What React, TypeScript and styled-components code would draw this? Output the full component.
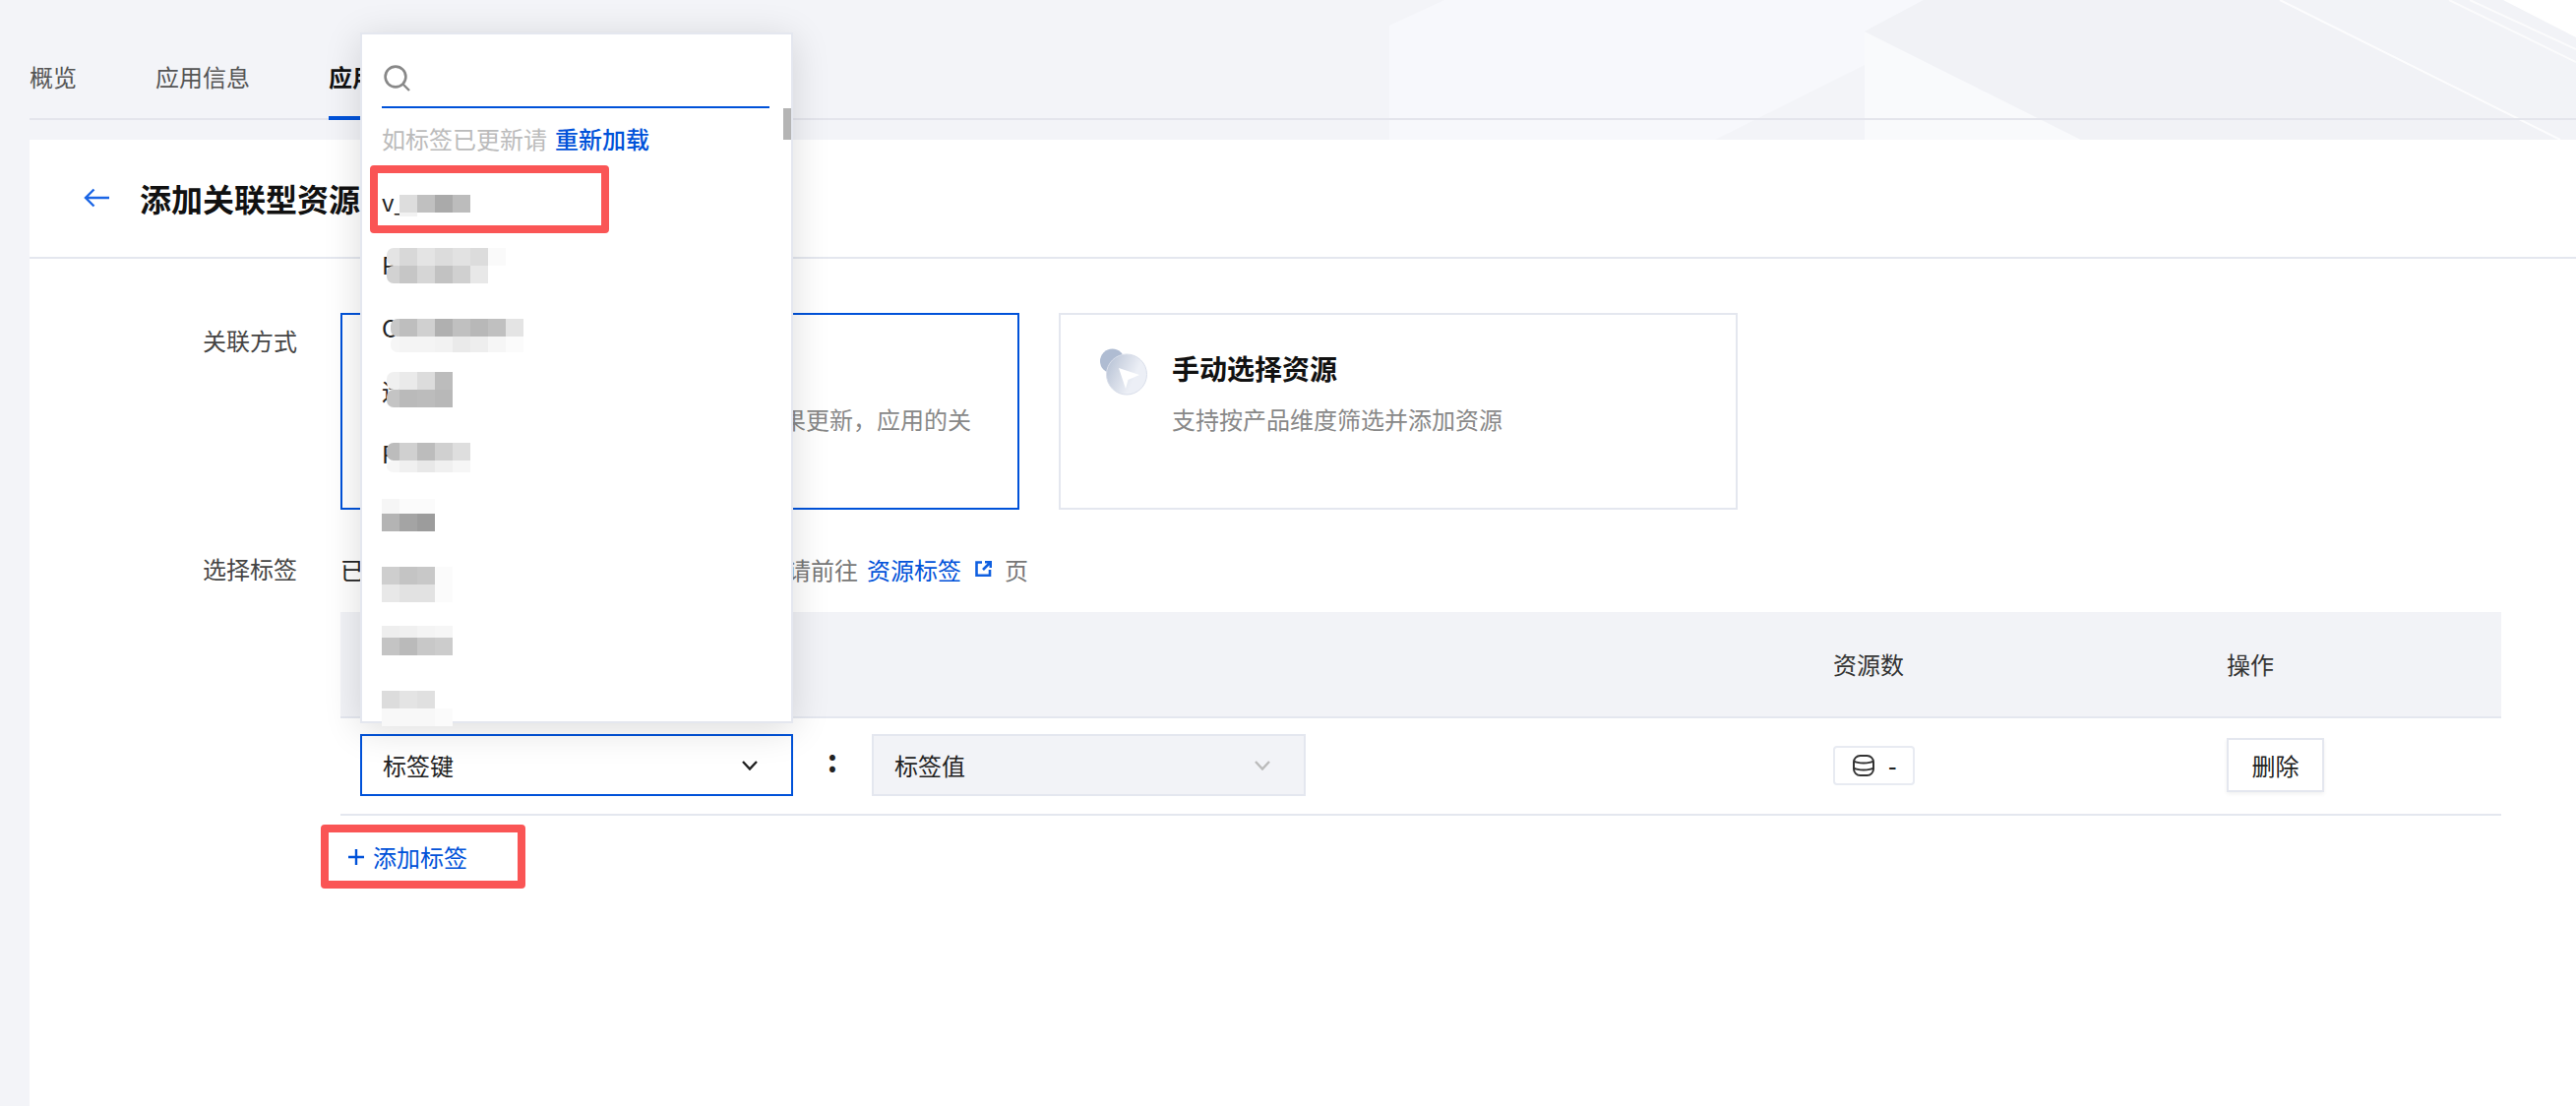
import React from 'react';
import styled, { createGlobalStyle } from 'styled-components';

const GlobalStyle = createGlobalStyle`
    html, body {
        margin: 0;
        padding: 0;
        background: #f3f4f8;
    }
    * {
        box-sizing: border-box;
    }
    body {
        font-family: "Noto Sans CJK SC", "Noto Sans", sans-serif;
        font-size: 24px;
        color: #222;
        overflow: hidden;
    }
`;

const BLUE = '#0052d9';
const LINE = '#e4e7ef';
const RED = '#fa5555';

const Page = styled.div`
    position: relative;
    width: 2618px;
    height: 1124px;
    overflow: hidden;
    background: #f3f4f8;
`;

const BackgroundArt = styled.svg`
    position: absolute;
    top: 0;
    left: 0;
`;

const TabBar = styled.div`
    position: relative;
    display: flex;
    align-items: flex-start;
    gap: 80px;
    height: 122px;
    margin: 0 0 20px 30px;
    border-bottom: 2px solid #e4e5ec;
`;

const Tab = styled.div<{ $active?: boolean }>`
    height: 122px;
    padding-top: 60px;
    line-height: 36px;
    color: ${(props) => (props.$active ? '#111' : '#555')};
    font-weight: ${(props) => (props.$active ? 600 : 400)};
    border-bottom: 4px solid ${(props) => (props.$active ? BLUE : 'transparent')};
`;

const Panel = styled.div`
    position: relative;
    margin-left: 30px;
    height: 982px;
    background: #fff;
`;

const PanelHeader = styled.div`
    display: flex;
    align-items: center;
    gap: 31px;
    height: 121px;
    padding: 0 0 1px 55px;
    border-bottom: 2px solid ${LINE};
`;

const PanelTitle = styled.div`
    font-size: 32px;
    font-weight: 600;
    line-height: 44px;
    color: #111;
`;

const Form = styled.div`
    display: grid;
    grid-template-columns: 96px 2196px;
    column-gap: 44px;
    padding: 55px 0 0 176px;
`;

const FieldLabel = styled.div<{ $top: number }>`
    padding-top: ${(props) => props.$top}px;
    line-height: 36px;
    color: #444;
`;

const CardRow = styled.div`
    display: flex;
    gap: 40px;
    margin-bottom: 42px;
`;

const Card = styled.div<{ $active?: boolean }>`
    display: flex;
    gap: ${(props) => (props.$active ? 23 : 25)}px;
    width: 690px;
    height: 200px;
    padding: 34px 40px 0;
    border: 2px solid ${(props) => (props.$active ? BLUE : LINE)};
`;

const CardIcon = styled.svg`
    flex: none;
`;

const CardTitle = styled.div`
    margin-bottom: 12px;
    font-size: 28px;
    font-weight: 600;
    line-height: 40px;
    color: #111;
`;

const CardText = styled.div`
    line-height: 40px;
    color: #888;
`;

const Hint = styled.div`
    display: flex;
    align-items: center;
    height: 36px;
    color: #777;
`;

const HintLead = styled.span`
    margin-right: -2px;
    color: #222;
`;

const HintLink = styled.a`
    margin: 0 14px 0 9px;
    color: ${BLUE};
`;

const ExternalIcon = styled.svg`
    margin-right: 13px;
`;

const TagTable = styled.div`
    margin-top: 26px;
`;

const TableRow = styled.div<{ $head?: boolean }>`
    display: grid;
    grid-template-columns: 1517px 400px 279px;
    align-items: center;
    height: ${(props) => (props.$head ? 108 : 99)}px;
    padding-bottom: ${(props) => (props.$head ? 0 : 2)}px;
    background: ${(props) => (props.$head ? '#f2f3f7' : '#fff')};
    border-bottom: 2px solid ${LINE};
`;

const HeadCell = styled.div`
    line-height: 36px;
    color: #333;
`;

const TagCell = styled.div`
    display: flex;
    align-items: center;
    padding-left: 20px;
`;

const SelectWrap = styled.div`
    position: relative;
`;

const Select = styled.div<{ $open?: boolean }>`
    display: flex;
    align-items: center;
    justify-content: space-between;
    width: ${(props) => (props.$open ? 440 : 441)}px;
    height: 63px;
    padding: 0 34px 0 21px;
    border: 2px solid ${(props) => (props.$open ? BLUE : LINE)};
    background: ${(props) => (props.$open ? '#fff' : '#f2f3f7')};
    color: #222;
`;

const Colon = styled.div`
    width: 80px;
    margin-top: -14px;
    text-align: center;
    font-size: 32px;
    font-weight: 700;
    line-height: 36px;
    color: #222;
`;

const CountTag = styled.div`
    display: flex;
    align-items: center;
    gap: 14px;
    width: 83px;
    height: 40px;
    padding-left: 18px;
    border: 2px solid #e8ebf2;
    border-radius: 4px;
    color: #222;
    font-weight: 500;
`;

const DeleteButton = styled.button`
    width: 99px;
    height: 55px;
    padding: 0;
    border: 2px solid ${LINE};
    background: #fff;
    box-shadow: 0 2px 4px rgba(0, 0, 0, 0.06);
    font: inherit;
    color: #222;
`;

const AddTag = styled.div`
    display: flex;
    align-items: center;
    gap: 9px;
    width: 208px;
    height: 65px;
    margin: 9px 0 0 -20px;
    padding-left: 20px;
    border: 8px solid ${RED};
    border-radius: 4px;
    color: ${BLUE};
`;

const Dropdown = styled.div`
    position: absolute;
    left: 0;
    bottom: calc(100% + 11px);
    z-index: 10;
    width: 440px;
    height: 702px;
    padding: 0 22px 0 20px;
    border: 2px solid ${LINE};
    background: #fff;
    box-shadow: 0 6px 36px rgba(0, 0, 0, 0.14);
`;

const SearchBox = styled.div`
    display: flex;
    align-items: flex-start;
    height: 75px;
    padding: 31px 0 0 2px;
    border-bottom: 2px solid ${BLUE};
`;

const ReloadNote = styled.div`
    margin: 13px 0 14px;
    line-height: 36px;
    color: #bbb;
`;

const ReloadLink = styled.a`
    margin-left: 8px;
    color: ${BLUE};
    font-weight: 500;
`;

const OptionRow = styled.div`
    position: relative;
    height: 64px;
    line-height: 64px;
    color: #222;
`;

const Redaction = styled.svg<{ $top: number }>`
    position: absolute;
    left: 0;
    top: ${(props) => props.$top}px;
`;

const Highlight = styled.div`
    position: absolute;
    left: -12px;
    top: -5px;
    width: 243px;
    height: 69px;
    border: 8px solid ${RED};
    border-radius: 4px;
`;

const ScrollThumb = styled.div`
    position: absolute;
    top: 75px;
    right: 0;
    width: 8px;
    height: 32px;
    background: #b4b4b4;
`;

type Redact = {
    label: string;
    top: number;
    heights: [number, number];
    inset?: number;
    cells: [string[], string[]];
};

// grey mosaic that hides the account names, 18px cells from the text's left edge
const options: Redact[] = [
    { label: 'v_', top: 25, heights: [18, 4], cells: [['', 'ddd', 'c0c0c0', 'aaa', 'bcbcbc'], ['', 'f2f2f2', '', '', '']] },
    { label: 'P', top: 15, heights: [18, 18], inset: 5, cells: [['e4e4e4', 'd8d8d8', 'e4e4e4', 'dcdcdc', 'e2e2e2', 'dcdcdc', 'fafafa'], ['d2d2d2', 'c6c6c6', 'd6d6d6', 'c2c2c2', 'd0d0d0', 'e8e8e8']] },
    { label: 'C', top: 23, heights: [18, 16], inset: 9, cells: [['c8c8c8', 'bebebe', 'd0d0d0', 'b0b0b0', 'c0c0c0', 'b8b8b8', 'c0c0c0', 'e4e4e4'], ['f6f6f6', 'f4f4f4', 'f4f4f4', 'f2f2f2', 'eaeaea', 'eeeeee', 'f6f6f6', 'fbfbfb']] },
    { label: '运', top: 13, heights: [18, 18], inset: 5, cells: [['f0f0f0', 'eaeaea', 'dcdcdc', 'bcbcbc'], ['c4c4c4', 'bababa', 'bcbcbc', 'b8b8b8']] },
    { label: 'P', top: 21, heights: [18, 12], inset: 5, cells: [['bcbcbc', 'd0d0d0', 'bcbcbc', 'd0d0d0', 'dedede'], ['f6f6f6', 'f0f0f0', 'e8e8e8', 'f0f0f0', 'f6f6f6']] },
    { label: '', top: 14, heights: [15, 18], cells: [['f6f6f6', 'fbfbfb', 'fbfbfb'], ['b4b4b4', 'a4a4a4', '9c9c9c']] },
    { label: '', top: 19, heights: [18, 18], cells: [['cecece', 'c4c4c4', 'c8c8c8', 'fbfbfb'], ['e8e8e8', 'e2e2e2', 'e2e2e2', 'fbfbfb']] },
    { label: '', top: 15, heights: [12, 18], cells: [['eeeeee', 'f0f0f0', 'f4f4f4', 'f6f6f6'], ['c4c4c4', 'bababa', 'c8c8c8', 'cccccc']] },
    { label: '', top: 17, heights: [18, 18], cells: [['dcdcdc', 'e4e4e4', 'e0e0e0'], ['f8f8f8', 'f8f8f8', 'f8f8f8', 'fbfbfb']] },
];

const RedactCells = ({ item }: { item: Redact }): JSX.Element => (
    <Redaction $top={item.top} width={180} height={item.heights[0] + item.heights[1]}>
        {item.cells.map((row, r) =>
            row.map((color, c) => {
                if (!color) return null;
                const inset = c === 0 && item.inset ? item.inset : 0;
                return (
                    <rect
                        key={`${r}-${c}`}
                        x={c * 18 + inset}
                        y={r === 0 ? 0 : item.heights[0]}
                        width={18 - inset + (inset ? 6 : 0)}
                        height={item.heights[r]}
                        rx={inset ? 7 : 0}
                        fill={`#${color}`}
                    />
                );
            })
        )}
    </Redaction>
);

const Chevron = ({ color }: { color: string }): JSX.Element => (
    <svg width="16" height="10" viewBox="0 0 16 10" fill="none">
        <path d="M1 1l7 7.5L15 1" stroke={color} strokeWidth="2.4" />
    </svg>
);

const ResourceIcon = ({ id }: { id: string }): JSX.Element => (
    <CardIcon width="48" height="48" viewBox="0 0 48 48">
        <defs>
            <linearGradient id={id} x1="0" y1="0.1" x2="0.75" y2="0.45">
                <stop offset="0" stopColor="#b4c0d4" />
                <stop offset="0.45" stopColor="#cfd6e3" />
                <stop offset="1" stopColor="#eceff6" />
            </linearGradient>
        </defs>
        <circle cx="12.5" cy="13" r="12.5" fill="#afbcd2" />
        <circle cx="27" cy="26.5" r="20.5" fill={`url(#${id})`} stroke="#d9deea" strokeWidth="1" />
        <path d="M19 20l21 7-11.5 5-2.5 9z" fill="#fff" />
    </CardIcon>
);

export default function App(): JSX.Element {
    return (
        <Page>
            <GlobalStyle />
            <BackgroundArt width="2618" height="142" viewBox="0 0 2618 142">
                <polygon points="1468,0 1955,0 1895,32 1895,66 1743,142 1412,142 1412,26" fill="#f7f8fc" />
                <polygon points="1895,32 2115,142 1895,142" fill="#f9fafc" />
                <polygon points="1955,0 2317,0 2602,142 2115,142 1895,32" fill="#f1f2f6" />
                <polygon points="2317,0 2618,0 2618,142 2602,142" fill="#f2f3f7" />
                <line x1="2317" y1="0" x2="2602" y2="142" stroke="#fff" strokeWidth="2" opacity="0.8" />
                <line x1="2489" y1="0" x2="2618" y2="63" stroke="#fff" strokeWidth="2" opacity="0.7" />
                <line x1="2510" y1="0" x2="2618" y2="50" stroke="#fff" strokeWidth="2" opacity="0.7" />
                <polygon points="2544,0 2618,0 2618,38" fill="#fff" />
            </BackgroundArt>
            <TabBar>
                <Tab>概览</Tab>
                <Tab>应用信息</Tab>
                <Tab $active>应用资源</Tab>
            </TabBar>
            <Panel>
                <PanelHeader>
                    <svg width="26" height="20" viewBox="0 0 26 20" fill="none">
                        <path d="M26 10H2M10.5 1.5L2 10l8.5 8.5" stroke="#1c66e5" strokeWidth="2.4" />
                    </svg>
                    <PanelTitle>添加关联型资源</PanelTitle>
                </PanelHeader>
                <Form>
                    <FieldLabel $top={10}>关联方式</FieldLabel>
                    <CardRow>
                        <Card $active>
                            <ResourceIcon id="cardIconA" />
                            <div>
                                <CardTitle>按标签关联资源</CardTitle>
                                <CardText>按标签自动关联资源，当匹配结果更新，应用的关联资源也会更新</CardText>
                            </div>
                        </Card>
                        <Card>
                            <ResourceIcon id="cardIconB" />
                            <div>
                                <CardTitle>手动选择资源</CardTitle>
                                <CardText>支持按产品维度筛选并添加资源</CardText>
                            </div>
                        </Card>
                    </CardRow>
                    <FieldLabel $top={0}>选择标签</FieldLabel>
                    <div>
                        <Hint>
                            <HintLead>已</HintLead>选择的标签将用于筛选资源，如需新建，请前往
                            <HintLink>资源标签</HintLink>
                            <ExternalIcon width="17" height="16" viewBox="0 0 17 16" fill="none">
                                <path d="M7 1.5H1.5V14.7H15V9M10 1.2h5.8V7M15.5 1.5L8 9" stroke="#0f5fe0" strokeWidth="2.6" />
                            </ExternalIcon>
                            页
                        </Hint>
                        <TagTable>
                            <TableRow $head>
                                <HeadCell />
                                <HeadCell>资源数</HeadCell>
                                <HeadCell>操作</HeadCell>
                            </TableRow>
                            <TableRow>
                                <TagCell>
                                    <SelectWrap>
                                        <Dropdown>
                                            <SearchBox>
                                                <svg width="28" height="27" viewBox="0 0 28 27" fill="none">
                                                    <circle cx="12" cy="12" r="10.4" stroke="#888" strokeWidth="2.6" />
                                                    <path d="M19.5 19.5l6.5 6.5" stroke="#888" strokeWidth="2.4" />
                                                </svg>
                                            </SearchBox>
                                            <ReloadNote>
                                                如标签已更新请<ReloadLink>重新加载</ReloadLink>
                                            </ReloadNote>
                                            {options.map((item, i) => (
                                                <OptionRow key={i}>
                                                    {item.label}
                                                    <RedactCells item={item} />
                                                    {i === 0 && <Highlight />}
                                                </OptionRow>
                                            ))}
                                            <ScrollThumb />
                                        </Dropdown>
                                        <Select $open>
                                            标签键
                                            <Chevron color="#222" />
                                        </Select>
                                    </SelectWrap>
                                    <Colon>:</Colon>
                                    <Select>
                                        标签值
                                        <Chevron color="#bbb" />
                                    </Select>
                                </TagCell>
                                <div>
                                    <CountTag>
                                        <svg width="22" height="22" viewBox="0 0 22 22" fill="none">
                                            <rect x="1" y="1" width="20" height="20" rx="6.5" stroke="#333" strokeWidth="2" />
                                            <path d="M1 6.5c4 2.6 16 2.6 20 0M1 13.5c4 2.6 16 2.6 20 0" stroke="#333" strokeWidth="2" />
                                        </svg>
                                        -
                                    </CountTag>
                                </div>
                                <div>
                                    <DeleteButton>删除</DeleteButton>
                                </div>
                            </TableRow>
                        </TagTable>
                        <AddTag>
                            <svg width="16" height="16" viewBox="0 0 16 16" fill="none">
                                <path d="M8 0v16M0 8h16" stroke={BLUE} strokeWidth="2.4" />
                            </svg>
                            添加标签
                        </AddTag>
                    </div>
                </Form>
            </Panel>
        </Page>
    );
}
